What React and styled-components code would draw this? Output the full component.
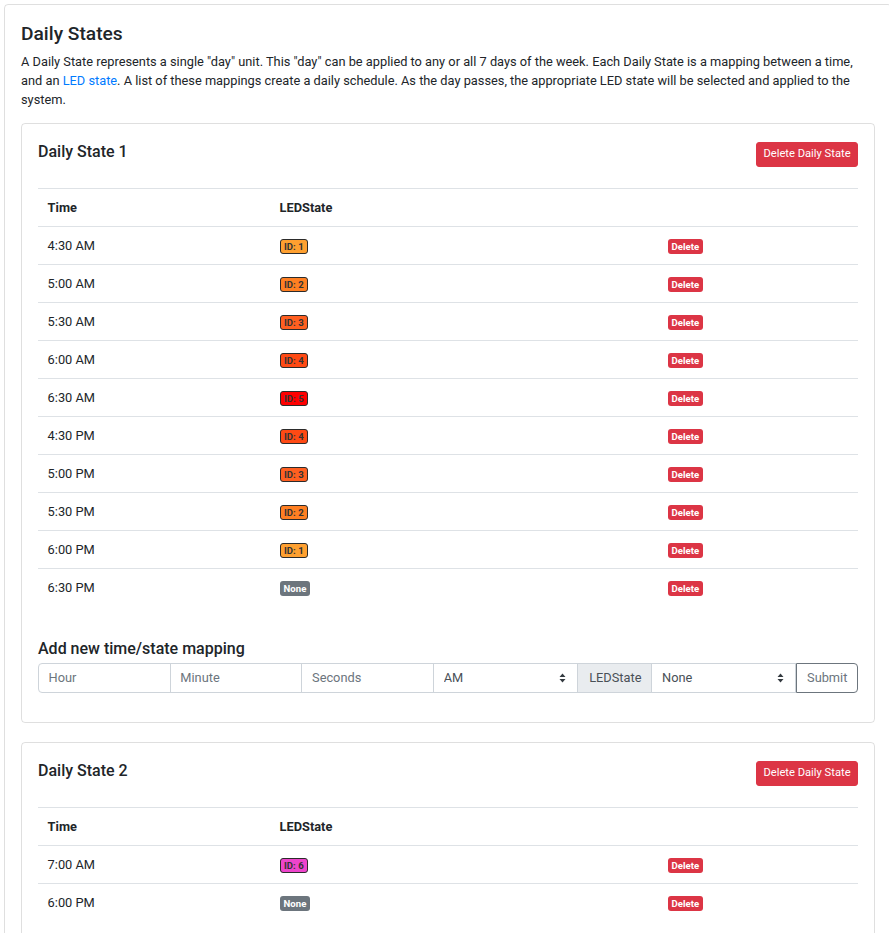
import React from 'react';
import styled, { createGlobalStyle } from 'styled-components';

const GlobalStyle = createGlobalStyle`
  html, body {
    margin: 0;
    overflow: hidden;
    background: #fff;
  }
  body {
    font-family: Roboto, "Liberation Sans", sans-serif;
    font-size: 12.8px;
    line-height: 1.5;
    color: #212529;
  }
  * {
    box-sizing: border-box;
  }
`;

const Page = styled.div`
  padding: 4px 0 0 4px;
`;

const OuterCard = styled.section`
  width: 888px;
  border: 1px solid rgba(0, 0, 0, 0.125);
  border-radius: 4px;
  padding: 16px;
`;

const PageTitle = styled.h4`
  margin: 1px 0 7px;
  font-size: 19.2px;
  font-weight: 500;
  line-height: 1.2;
`;

const Intro = styled.p`
  margin: 0 0 13px;
  line-height: 19.2px;
  a {
    color: #007bff;
    text-decoration: none;
  }
`;

const Card = styled.div`
  border: 1px solid rgba(0, 0, 0, 0.125);
  border-radius: 4px;
  padding: 18px 16px 16px;
  margin-bottom: 19px;
`;

const CardHeader = styled.div`
  display: flex;
  justify-content: space-between;
  align-items: flex-start;
  margin-bottom: 21px;
`;

const CardTitle = styled.h5`
  margin: 0;
  font-size: 16px;
  font-weight: 500;
  line-height: 1.2;
`;

const DangerButton = styled.button`
  font-family: inherit;
  font-size: 11.2px;
  line-height: 16px;
  padding: 3.5px 6.4px;
  color: #fff;
  background: #dc3545;
  border: 1px solid #dc3545;
  border-radius: 3px;
`;

const Table = styled.table`
  width: 100%;
  border-collapse: collapse;
  table-layout: fixed;
  margin-bottom: 33px;
`;

const Cell = styled.td`
  padding: 9px 9.6px;
  border-top: 1px solid #dee2e6;
  line-height: 19px;
  text-align: left;
  vertical-align: top;
`;

const HeadCell = styled(Cell).attrs({ as: 'th' })`
  font-weight: 700;
`;

const Badge = styled.span`
  display: inline-block;
  font-size: 9.6px;
  font-weight: 700;
  line-height: 1;
  padding: ${p => (p.$outlined ? '1.6px 3.4px' : '2.4px 4px')};
  border-radius: 3px;
  border: ${p => (p.$outlined ? '1px solid #2b2b2b' : 'none')};
  background: ${p => p.$bg};
  color: ${p => p.$fg || '#fff'};
`;

const SectionTitle = styled.h5`
  margin: 0 0 5px;
  font-size: 16px;
  font-weight: 500;
  line-height: 1.2;
`;

const InputGroup = styled.form`
  display: flex;
  margin-bottom: 13px;
  height: 30px;
`;

const TextInput = styled.input`
  flex: 1 1 0;
  min-width: 0;
  font-family: inherit;
  font-size: 12.8px;
  padding: 4.8px 9.6px;
  color: #495057;
  border: 1px solid #ced4da;
  margin-left: -1px;
  &:first-child {
    margin-left: 0;
    border-radius: 4px 0 0 4px;
  }
  &::placeholder {
    color: #6c757d;
  }
`;

const SelectWrap = styled.div`
  position: relative;
  width: 145px;
  flex: none;
  margin-left: -1px;
  svg {
    position: absolute;
    right: 12px;
    top: 10px;
    pointer-events: none;
  }
`;

const Select = styled.select`
  appearance: none;
  width: 100%;
  height: 100%;
  font-family: inherit;
  font-size: 12.8px;
  padding: 4.8px 24px 4.8px 9.6px;
  color: #495057;
  background: #fff;
  border: 1px solid #ced4da;
  border-radius: 0;
`;

const Addon = styled.span`
  flex: none;
  display: flex;
  align-items: center;
  padding: 0 10px 0 11px;
  margin-left: -1px;
  font-size: 12.8px;
  color: #495057;
  background: #e9ecef;
  border: 1px solid #ced4da;
`;

const OutlineButton = styled.button`
  flex: none;
  font-family: inherit;
  font-size: 12.8px;
  padding: 0 9.6px;
  color: #6c757d;
  background: #fff;
  border: 1px solid #6c757d;
  border-radius: 0 4px 4px 0;
`;

const Caret = () => (
  <svg width="7" height="10" viewBox="0 0 7 10">
    <path d="M3.5 0.5 L6.5 4 L0.5 4 Z M3.5 9.5 L0.5 6 L6.5 6 Z" fill="#343a40" />
  </svg>
);

const LED_COLORS = {
  1: '#ffa030',
  2: '#ff7f22',
  3: '#ff5f20',
  4: '#ff4a14',
  5: '#ff0000',
  6: '#ee44cc',
};

const LedBadge = ({ id }) =>
  id ? (
    <Badge $outlined $bg={LED_COLORS[id]} $fg="#333">
      ID: {id}
    </Badge>
  ) : (
    <Badge $bg="#6c757d">None</Badge>
  );

const dailyStates = [
  {
    name: 'Daily State 1',
    rows: [
      ['4:30 AM', 1],
      ['5:00 AM', 2],
      ['5:30 AM', 3],
      ['6:00 AM', 4],
      ['6:30 AM', 5],
      ['4:30 PM', 4],
      ['5:00 PM', 3],
      ['5:30 PM', 2],
      ['6:00 PM', 1],
      ['6:30 PM', null],
    ],
  },
  {
    name: 'Daily State 2',
    rows: [
      ['7:00 AM', 6],
      ['6:00 PM', null],
    ],
  },
];

const DailyStateCard = ({ state }) => (
  <Card>
    <CardHeader>
      <CardTitle>{state.name}</CardTitle>
      <DangerButton>Delete Daily State</DangerButton>
    </CardHeader>
    <Table>
      <colgroup>
        <col style={{ width: 232 }} />
        <col style={{ width: 388 }} />
        <col />
      </colgroup>
      <thead>
        <tr>
          <HeadCell>Time</HeadCell>
          <HeadCell>LEDState</HeadCell>
          <HeadCell />
        </tr>
      </thead>
      <tbody>
        {state.rows.map(([time, id], i) => (
          <tr key={i}>
            <Cell>{time}</Cell>
            <Cell>
              <LedBadge id={id} />
            </Cell>
            <Cell>
              <Badge $bg="#dc3545">Delete</Badge>
            </Cell>
          </tr>
        ))}
      </tbody>
    </Table>
    <SectionTitle>Add new time/state mapping</SectionTitle>
    <InputGroup onSubmit={e => e.preventDefault()}>
      <TextInput placeholder="Hour" />
      <TextInput placeholder="Minute" />
      <TextInput placeholder="Seconds" />
      <SelectWrap>
        <Select defaultValue="AM">
          <option>AM</option>
          <option>PM</option>
        </Select>
        <Caret />
      </SelectWrap>
      <Addon>LEDState</Addon>
      <SelectWrap>
        <Select defaultValue="None">
          <option>None</option>
        </Select>
        <Caret />
      </SelectWrap>
      <OutlineButton type="submit">Submit</OutlineButton>
    </InputGroup>
  </Card>
);

const App = () => (
  <Page>
    <GlobalStyle />
    <OuterCard>
      <PageTitle>Daily States</PageTitle>
      <Intro>
        A Daily State represents a single "day" unit. This "day" can be applied to any or all 7
        days of the week. Each Daily State is a mapping between a time, and an{' '}
        <a href="#led">LED state</a>. A list of these mappings create a daily schedule. As the day
        passes, the appropriate LED state will be selected and applied to the system.
      </Intro>
      {dailyStates.map(s => (
        <DailyStateCard key={s.name} state={s} />
      ))}
    </OuterCard>
  </Page>
);

export default App;
